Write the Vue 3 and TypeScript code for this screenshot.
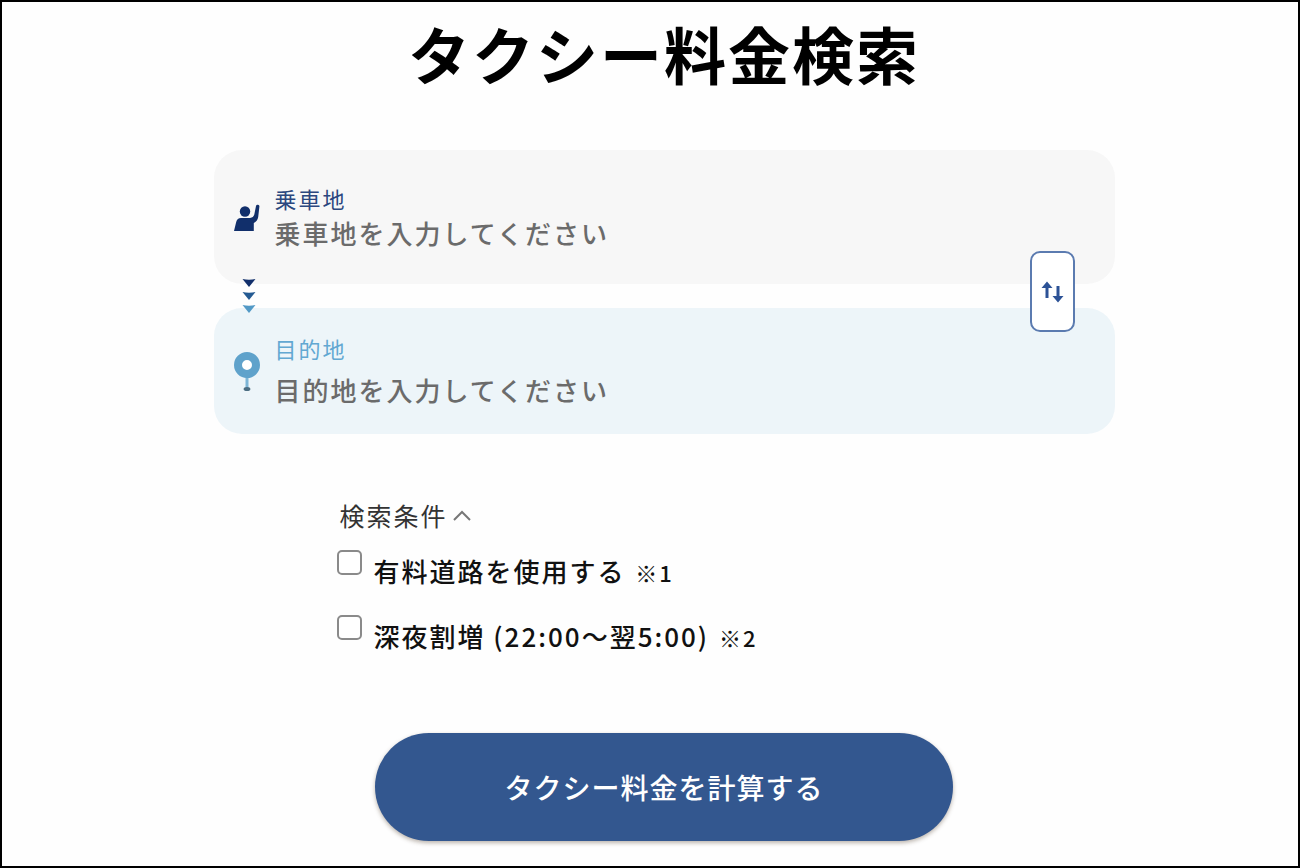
<script setup lang="ts">
import { ref } from 'vue'

interface Option {
  id: string
  label: string
  note: string
  checked: boolean
}

const pickup = ref('')
const destination = ref('')
const open = ref(true)
const options = ref<Option[]>([
  { id: 'toll', label: '有料道路を使用する', note: '※1', checked: false },
  { id: 'night', label: '深夜割増 (22:00〜翌5:00)', note: '※2', checked: false },
])

function swap(): void {
  const previous = pickup.value
  pickup.value = destination.value
  destination.value = previous
}
</script>

<template>
  <main class="page">
    <h1 class="title">タクシー料金検索</h1>
    <form class="search" @submit.prevent>
      <div class="places">
        <div class="card pickup">
          <svg class="icon person" viewBox="0 0 28 28" aria-hidden="true">
            <circle cx="12" cy="7.5" r="5.2" />
            <path d="M1 27 L3.2 18 Q4.2 14 8 14 H17 Q20.5 13.5 21.3 10.5 L23 2 Q23.4 0.4 25 0.7 Q26.6 1 26.4 2.6 L25.2 13 Q24.6 17 20.8 19 V27 Z" />
          </svg>
          <div class="field">
            <label for="pickup">乗車地</label>
            <input id="pickup" v-model="pickup" type="text" placeholder="乗車地を入力してください" />
          </div>
        </div>
        <div class="card destination">
          <svg class="icon pin" viewBox="0 0 28 42" aria-hidden="true">
            <path class="stem" d="M14 25 V39" />
            <ellipse class="foot" cx="14" cy="38" rx="3.4" ry="2" />
            <circle class="ring" cx="14" cy="14" r="9" />
          </svg>
          <div class="field">
            <label for="destination">目的地</label>
            <input id="destination" v-model="destination" type="text" placeholder="目的地を入力してください" />
          </div>
        </div>
        <svg class="arrows" viewBox="0 0 14 36" aria-hidden="true">
          <path fill="#112f6b" d="M0.5 1 Q7 2.4 13.5 1 L7 9 Z" />
          <path fill="#245a92" d="M0.5 14 Q7 15.4 13.5 14 L7 22 Z" />
          <path fill="#5299c6" d="M0.5 27 Q7 28.4 13.5 27 L7 35 Z" />
        </svg>
        <button class="swap" type="button" aria-label="入れ替え" @click="swap">
          <svg viewBox="0 0 24 24" aria-hidden="true">
            <path class="shaft" d="M7 5 V18 M18 6 V19" />
            <path d="M7 1.5 L12.5 8 H1.5 Z M18 22.5 L12.5 16 H23.5 Z" />
          </svg>
        </button>
      </div>

      <section class="conditions">
        <button class="toggle" type="button" :aria-expanded="open" @click="open = !open">
          検索条件
          <svg viewBox="0 0 20 12" aria-hidden="true"><path d="M2 11 L10 3 L18 11" /></svg>
        </button>
        <template v-if="open">
          <div v-for="option in options" :key="option.id" class="option">
            <input :id="option.id" v-model="option.checked" type="checkbox" />
            <label :for="option.id">{{ option.label }} <small>{{ option.note }}</small></label>
          </div>
        </template>
      </section>

      <button class="submit" type="submit">タクシー料金を計算する</button>
    </form>
  </main>
</template>

<style>
body {
  margin: 0;
  background: #fff;
}
</style>

<style scoped>
.page {
  box-sizing: border-box;
  min-height: 100vh;
  padding: 15px 0 24px 28px;
  border: 2px solid #000;
  background: #fefefe;
  color: #111;
  font-family: "Noto Sans CJK JP", sans-serif;
}

button,
input {
  font-family: inherit;
}

.title {
  margin: 0 0 61px;
  color: #000;
  font-size: 62px;
  font-weight: 700;
  line-height: 72px;
  letter-spacing: 2px;
  text-align: center;
}

.search {
  display: flex;
  flex-direction: column;
  align-items: center;
}

.places {
  position: relative;
  display: flex;
  flex-direction: column;
  gap: 24px;
  box-sizing: border-box;
  width: 100%;
  max-width: 901px;
}

.card {
  display: flex;
  align-items: center;
  gap: 14px;
  border-radius: 28px;
}

.pickup {
  padding: 36px 96px 33px 19px;
  background: #f7f7f7;
}

.destination {
  padding: 28px 96px 26px 19px;
  background: #edf5f9;
}

.icon {
  flex: none;
  width: 28px;
}

.person {
  height: 28px;
  margin-bottom: 2px;
  fill: #112f6b;
}

.pin {
  height: 42px;
}

.ring {
  fill: #fff;
  stroke: #5fa2cb;
  stroke-width: 8;
}

.stem {
  stroke: #7cb5d6;
  stroke-width: 3;
}

.foot {
  fill: #4b6d82;
}

.field {
  display: flex;
  flex: 1;
  flex-direction: column;
  gap: 5px;
}

.destination .field {
  gap: 12px;
}

.field label {
  color: #2b477f;
  font-size: 22px;
  line-height: 24px;
  letter-spacing: 2px;
}

.destination label {
  color: #62a8d2;
}

.field input {
  width: 100%;
  height: 36px;
  padding: 0;
  border: 0;
  outline: 0;
  background: transparent;
  color: #333;
  font-size: 26px;
  font-weight: 500;
  line-height: 36px;
  letter-spacing: 2px;
}

.field input::placeholder {
  color: #6b6b6b;
  opacity: 1;
}

.arrows {
  position: absolute;
  top: 128px;
  left: 28px;
  width: 14px;
  height: 36px;
}

.swap {
  position: absolute;
  top: 101px;
  right: 40px;
  display: grid;
  place-items: center;
  box-sizing: border-box;
  width: 45px;
  height: 81px;
  padding: 0;
  border: 2px solid #5b7bb0;
  border-radius: 10px;
  background: #fff;
}

.swap svg {
  width: 24px;
  height: 24px;
  fill: #2c5296;
}

.shaft {
  stroke: #2c5296;
  stroke-width: 3;
}

.conditions {
  display: flex;
  flex-direction: column;
  align-items: flex-start;
  box-sizing: border-box;
  width: 100%;
  max-width: 655px;
  margin-top: 63px;
}

.toggle {
  display: flex;
  align-items: center;
  gap: 4px;
  margin-bottom: 17px;
  padding: 0 3px;
  border: 0;
  background: none;
  color: #333;
  font-size: 25px;
  line-height: 36px;
  letter-spacing: 2px;
}

.toggle svg {
  width: 20px;
  height: 12px;
  fill: none;
  stroke: #777;
  stroke-width: 2;
}

.option {
  display: flex;
  align-items: flex-start;
  gap: 12px;
  height: 65px;
}

.option input {
  appearance: none;
  box-sizing: border-box;
  width: 25px;
  height: 25px;
  margin: 0;
  border: 2px solid #8a8a8a;
  border-radius: 5px;
  background: #fff;
}

.option input:checked {
  background: #33578f;
}

.option label {
  padding-top: 3px;
  font-size: 26px;
  font-weight: 500;
  line-height: 36px;
  letter-spacing: 2px;
}

.option small {
  margin-left: 2px;
  font-size: 22px;
}

.submit {
  width: 100%;
  max-width: 578px;
  height: 108px;
  margin-top: 53px;
  padding: 0;
  border: 0;
  border-radius: 54px;
  background: #33578f;
  box-shadow: 0 2px 4px rgba(60, 40, 20, 0.35);
  color: #fff;
  font-size: 28px;
  font-weight: 500;
  letter-spacing: 1px;
}
</style>
